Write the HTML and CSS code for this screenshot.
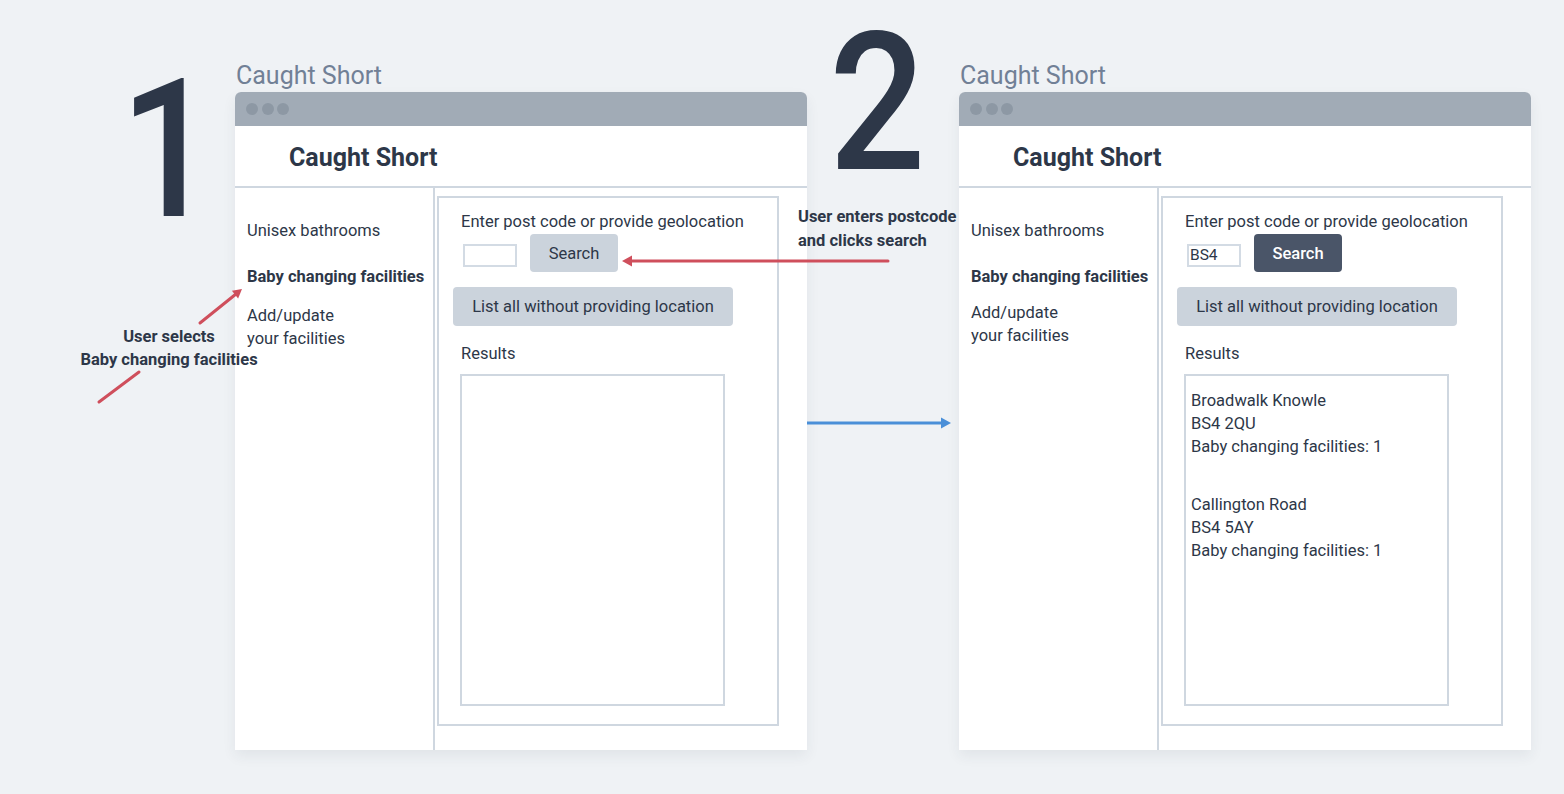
FILE: index.html
```html
<!DOCTYPE html>
<html lang="en">
<head>
<meta charset="utf-8">
<title>Caught Short – user flow</title>
<link rel="stylesheet" href="styles.css">
</head>
<body>
<div class="canvas">
  <div class="step-num step-num--1">1</div>
  <div class="step-num step-num--2">2</div>

  <section class="board board--1">
    <div class="board__title">Caught Short</div>
    <div class="window">
      <div class="window__bar"><span class="dot"></span><span class="dot"></span><span class="dot"></span></div>
      <header class="app-header">Caught Short</header>
      <div class="app-body">
        <nav class="sidebar">
          <div class="sidebar__item sidebar__item--first">Unisex bathrooms</div>
          <div class="sidebar__item sidebar__item--active">Baby changing facilities</div>
          <div class="sidebar__item sidebar__item--add">Add/update<br>your facilities</div>
        </nav>
        <main class="main">
          <div class="panel">
            <div class="panel__label">Enter post code or provide geolocation</div>
            <div class="search-row">
              <div class="postcode"></div>
              <div class="btn btn--search">Search</div>
            </div>
            <div class="btn btn--list">List all without providing location</div>
            <div class="panel__results-label">Results</div>
            <div class="results"></div>
          </div>
        </main>
      </div>
    </div>
  </section>

  <section class="board board--2">
    <div class="board__title">Caught Short</div>
    <div class="window">
      <div class="window__bar"><span class="dot"></span><span class="dot"></span><span class="dot"></span></div>
      <header class="app-header">Caught Short</header>
      <div class="app-body">
        <nav class="sidebar">
          <div class="sidebar__item sidebar__item--first">Unisex bathrooms</div>
          <div class="sidebar__item sidebar__item--active">Baby changing facilities</div>
          <div class="sidebar__item sidebar__item--add sidebar__item--tight">Add/update<br>your facilities</div>
        </nav>
        <main class="main">
          <div class="panel">
            <div class="panel__label">Enter post code or provide geolocation</div>
            <div class="search-row">
              <div class="postcode">BS4</div>
              <div class="btn btn--search btn--dark">Search</div>
            </div>
            <div class="btn btn--list">List all without providing location</div>
            <div class="panel__results-label">Results</div>
            <div class="results">
              <div class="result">Broadwalk Knowle<br>BS4 2QU<br>Baby changing facilities: 1</div>
              <div class="result result--next">Callington Road<br>BS4 5AY<br>Baby changing facilities: 1</div>
            </div>
          </div>
        </main>
      </div>
    </div>
  </section>

  <svg class="arrows" width="1564" height="794" viewBox="0 0 1564 794">
    <g stroke="#cf4f5c" stroke-width="3" stroke-linecap="round" fill="none">
      <line x1="200" y1="323" x2="236" y2="294"/>
      <line x1="99" y1="402" x2="139" y2="372"/>
      <line x1="888" y1="261" x2="630" y2="261"/>
    </g>
    <g fill="#cf4f5c">
      <polygon points="242,289 238.1,298.6 231.9,290.8"/>
      <polygon points="622,261 632,255.5 632,266.5"/>
    </g>
    <line x1="807" y1="423" x2="943" y2="423" stroke="#4a8fd8" stroke-width="3"/>
    <polygon points="951,423 941,417.5 941,428.5" fill="#4a8fd8"/>
  </svg>

  <div class="note note--select">User selects<br>Baby changing facilities</div>
  <div class="note note--search">User enters postcode<br>and clicks search</div>
</div>
</body>
</html>
```

FILE: styles.css
```css
* { box-sizing: border-box; }

html, body {
  margin: 0;
  padding: 0;
}

body {
  background: #eff2f5;
  font-family: Roboto, "Liberation Sans", sans-serif;
  color: #2d3748;
  overflow: hidden;
}

.canvas {
  position: relative;
  width: 1564px;
  height: 794px;
}

/* big step numbers */
.step-num {
  position: absolute;
  font-size: 193px;
  line-height: 0.8;
  font-weight: 500;
  color: #2d3748;
  transform: scaleX(0.88);
  transform-origin: left top;
}
.step-num--1 { left: 120px; top: 73px; }
.step-num--2 { left: 829px; top: 26px; }

/* boards (frames on canvas) */
.board {
  position: absolute;
  top: 60px;
  width: 572px;
}
.board--1 { left: 235px; }
.board--2 { left: 959px; }

.board__title {
  height: 32px;
  line-height: 32px;
  font-size: 25px;
  color: #718096;
  padding-left: 1px;
}

.window {
  height: 658px;
  display: flex;
  flex-direction: column;
  background: #fff;
  border-radius: 6px 6px 0 0;
  box-shadow: 0 6px 14px rgba(45, 55, 72, 0.07);
}

.window__bar {
  height: 34px;
  background: #a1abb6;
  border-radius: 6px 6px 0 0;
  display: flex;
  align-items: center;
  gap: 3.5px;
  padding-left: 11px;
}

.dot {
  width: 12px;
  height: 12px;
  border-radius: 50%;
  background: #8d98a4;
}

.app-header {
  height: 62px;
  border-bottom: 2px solid #cfd7e0;
  display: flex;
  align-items: center;
  padding-left: 54px;
  padding-top: 2px;
  font-size: 25px;
  font-weight: 700;
  color: #2d3748;
}

.app-body {
  flex: 1;
  display: flex;
}

.sidebar {
  width: 200px;
  border-right: 2px solid #cfd7e0;
  padding: 31px 0 0 12px;
  font-size: 16.5px;
  line-height: 23px;
  color: #2d3748;
}

.sidebar__item--active {
  margin-top: 23px;
  font-weight: 700;
}
.sidebar__item--add { margin-top: 16px; }
.sidebar__item--tight { margin-top: 13px; }

.main {
  flex: 1;
  display: flex;
  padding: 8px 28px 24px 2px;
}

.panel {
  flex: 1;
  border: 2px solid #cfd7e0;
  padding-top: 12px;
  display: flex;
  flex-direction: column;
  align-items: flex-start;
  font-size: 16.5px;
  line-height: 23px;
}

.panel__label { margin-left: 22px; }

.search-row {
  margin-top: 1px;
  display: flex;
  align-items: center;
}

.postcode {
  margin-left: 24px;
  margin-top: 5px;
  width: 54px;
  height: 23px;
  border: 2px solid #d3dbe4;
  font-size: 15.5px;
  line-height: 19px;
  padding-left: 1px;
}

.btn {
  display: flex;
  align-items: center;
  justify-content: center;
  background: #cbd3dc;
  border-radius: 4px;
  color: #2d3748;
  font-size: 16.5px;
}

.btn--search {
  margin-left: 13px;
  width: 88px;
  height: 38px;
}

.btn--dark {
  background: #4a5568;
  color: #fff;
  font-weight: 500;
}

.btn--list {
  margin-top: 15px;
  margin-left: 14px;
  width: 280px;
  height: 39px;
}

.panel__results-label {
  margin-top: 16px;
  margin-left: 22px;
}

.results {
  margin-top: 9px;
  margin-left: 21px;
  width: 265px;
  height: 332px;
  border: 2px solid #cfd7e0;
  padding: 13px 0 0 5px;
}

.result--next { margin-top: 35px; }

/* annotations */
.arrows {
  position: absolute;
  left: 0;
  top: 0;
  pointer-events: none;
}

.note {
  position: absolute;
  font-size: 16.5px;
  font-weight: 700;
  color: #2d3748;
}

.note--select {
  left: 69px;
  top: 325px;
  width: 200px;
  text-align: center;
  line-height: 23px;
}

.note--search {
  left: 798px;
  top: 205px;
  line-height: 24px;
}
```
